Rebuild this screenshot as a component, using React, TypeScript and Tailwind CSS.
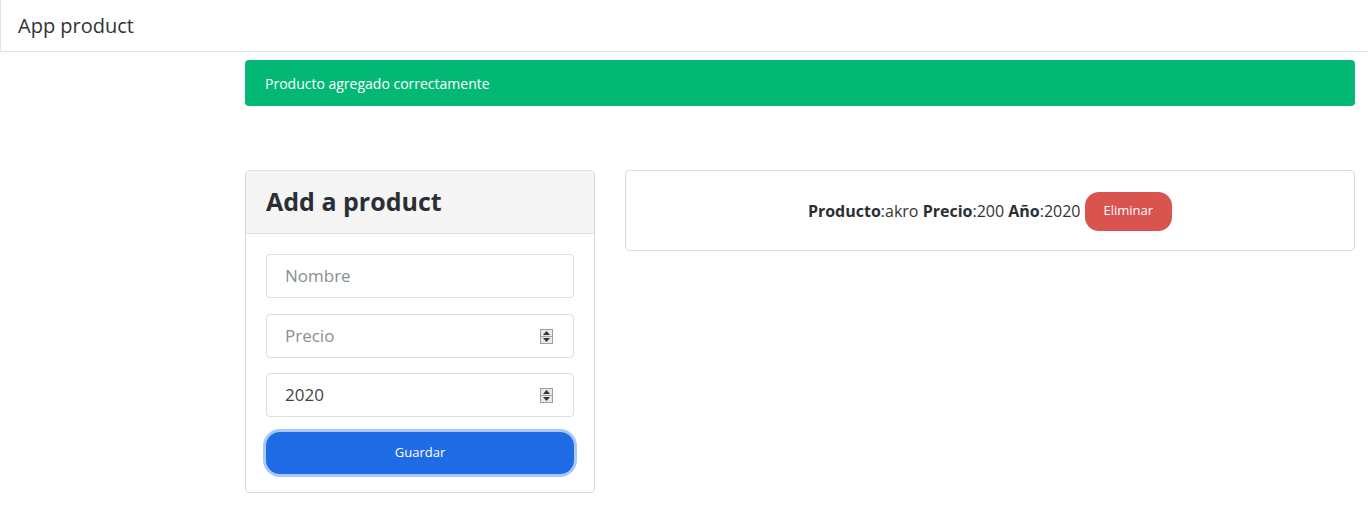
const font = { fontFamily: '"Open Sans", "Noto Sans", sans-serif' };

const Spinner = () => (
  <div className="flex flex-col w-[13px] h-[15px] border border-[#a0a0a0] bg-[#e8e8e8]">
    <div className="flex-1 flex items-center justify-center border-b border-[#a0a0a0]">
      <svg width="7" height="4" viewBox="0 0 7 4"><path d="M3.5 0 L7 4 L0 4 Z" fill="#333" /></svg>
    </div>
    <div className="flex-1 flex items-center justify-center">
      <svg width="7" height="4" viewBox="0 0 7 4"><path d="M0 0 L7 0 L3.5 4 Z" fill="#333" /></svg>
    </div>
  </div>
);

const Field = ({ text, placeholder, spin }: { text: string; placeholder?: boolean; spin?: boolean }) => (
  <div className="flex items-center justify-between h-[44px] border border-[#dedede] rounded-[4px] pl-[18px] pr-[20px]">
    <span className={`text-[17px] ${placeholder ? 'text-[#8a8f95]' : 'text-[#444]'}`}>{text}</span>
    {spin && <Spinner />}
  </div>
);

export default function App() {
  return (
    <div className="min-h-[507px] bg-white text-[#333]" style={font}>
      <nav className="h-[52px] border-l border-b border-[#e2e2e2] flex items-center pl-[17px]">
        <span className="text-[20px] text-[#333]">App product</span>
      </nav>
      <div className="pl-[245px] pr-[13px]">
        <div className="mt-[8px] h-[46px] bg-[#03b875] rounded-[4px] flex items-center pl-[20px] text-white text-[14px]">
          Producto agregado correctamente
        </div>
        <div className="flex gap-[30px] mt-[64px] items-start">
          <div className="w-[350px] border border-[#dcdcdc] rounded-[4px] overflow-hidden">
            <div className="h-[63px] bg-[#f5f5f5] border-b border-[#dcdcdc] flex items-center pl-[20px]">
              <h2 className="text-[25px] font-bold text-[#2a2f35]">Add a product</h2>
            </div>
            <div className="px-[20px] pt-[20px] pb-[18px] flex flex-col">
              <Field text="Nombre" placeholder />
              <div className="mt-[16px]"><Field text="Precio" placeholder spin /></div>
              <div className="mt-[15px]"><Field text="2020" spin /></div>
              <button className="mt-[15px] h-[42px] rounded-[14px] bg-[#1f6be6] text-white text-[13px] ring-[3px] ring-[#a9c8f5]">
                Guardar
              </button>
            </div>
          </div>
          <div className="flex-1 h-[81px] border border-[#dcdcdc] rounded-[4px] flex items-center justify-center gap-[4px] pt-[1px]">
            <span className="text-[16px] text-[#333]">
              <b className="text-[#2a2f35]">Producto</b>:akro <b className="text-[#2a2f35]">Precio</b>:200 <b className="text-[#2a2f35]">Año</b>:2020
            </span>
            <button className="h-[39px] px-[19px] rounded-[14px] bg-[#d9534f] text-white text-[13px]">Eliminar</button>
          </div>
        </div>
      </div>
    </div>
  );
}
